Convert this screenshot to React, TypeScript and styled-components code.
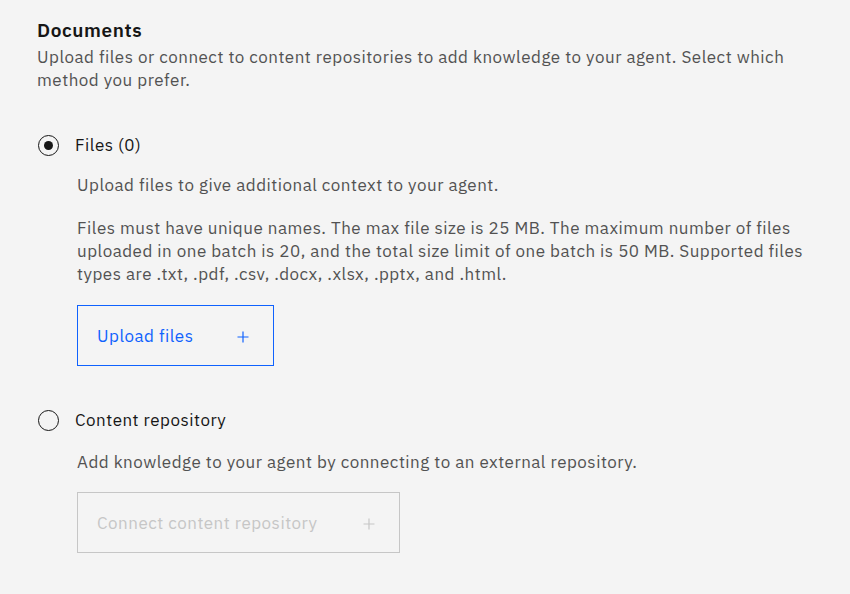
import React from "react";
import styled, { createGlobalStyle } from "styled-components";

const Global = createGlobalStyle`
  html, body { margin: 0; padding: 0; background: #f4f4f4; }
  body { font-family: "IBM Plex Sans", Inter, "Noto Sans", sans-serif; }
`;

const Page = styled.div`
  width: 850px;
  height: 594px;
  box-sizing: border-box;
  padding: 17px 37px 0 37px;
  background: #f4f4f4;
  color: #161616;
`;

const Title = styled.h2`
  margin: 0;
  font-size: 19px;
  line-height: 26px;
  font-weight: 600;
  letter-spacing: 0.6px;
  color: #161616;
`;

const Description = styled.p`
  margin: 3px 0 0 0;
  font-size: 17px;
  line-height: 23px;
  letter-spacing: 0.5px;
  color: #525252;
  white-space: nowrap;
`;

const Options = styled.div`
  display: flex;
  flex-direction: column;
  margin-top: 41px;
`;

const Option = styled.div<{ $gap?: number }>`
  display: flex;
  flex-direction: column;
  margin-bottom: ${(p) => p.$gap ?? 0}px;
`;

const RadioRow = styled.div`
  display: flex;
  align-items: center;
  gap: 16px;
  padding-left: 1px;
  height: 24px;
  font-size: 17px;
  letter-spacing: 0.5px;
  color: #161616;
`;

const Circle = styled.span<{ $checked?: boolean }>`
  width: 21px;
  height: 21px;
  box-sizing: border-box;
  border-radius: 50%;
  border: 1.5px solid #161616;
  display: flex;
  align-items: center;
  justify-content: center;
  &::after {
    content: "";
    width: 9px;
    height: 9px;
    border-radius: 50%;
    background: #161616;
    display: ${(p) => (p.$checked ? "block" : "none")};
  }
`;

const Body = styled.div<{ $top: number }>`
  display: flex;
  flex-direction: column;
  padding-left: 40px;
  margin-top: ${(p) => p.$top}px;
`;

const Text = styled.p<{ $mb?: number }>`
  margin: 0 0 ${(p) => p.$mb ?? 0}px 0;
  font-size: 17px;
  line-height: 23px;
  letter-spacing: 0.5px;
  color: #525252;
  white-space: nowrap;
`;

const Button = styled.div<{ $disabled?: boolean }>`
  display: flex;
  align-items: center;
  box-sizing: border-box;
  height: 61px;
  padding: 0 22px 0 19px;
  background: transparent;
  color: ${(p) => (p.$disabled ? "#c6c6c6" : "#0f62fe")};
  border: 1px solid currentColor;
  font-size: 17px;
  letter-spacing: 0.5px;
  align-self: flex-start;
  cursor: ${(p) => (p.$disabled ? "not-allowed" : "pointer")};
`;

const ButtonLabel = styled.span<{ $w: number }>`
  width: ${(p) => p.$w}px;
  text-align: left;
`;

const IconBox = styled.span`
  display: flex;
  width: 16px;
  height: 16px;
  align-items: center;
  justify-content: center;
  margin-top: 2px;
`;

const Plus = () => (
  <IconBox>
    <svg width="16" height="16" viewBox="0 0 16 16" fill="none">
      <path d="M8 2.5v11M2.5 8h11" stroke="currentColor" strokeWidth="1.2" />
    </svg>
  </IconBox>
);

export default function App() {
  return (
    <Page>
      <Global />
      <Title>Documents</Title>
      <Description>
        Upload files or connect to content repositories to add knowledge to your agent. Select which
        <br />
        method you prefer.
      </Description>
      <Options>
        <Option $gap={42}>
          <RadioRow>
            <Circle $checked />
            Files (0)
          </RadioRow>
          <Body $top={17}>
            <Text $mb={20}>Upload files to give additional context to your agent.</Text>
            <Text $mb={19}>
              Files must have unique names. The max file size is 25 MB. The maximum number of files
              <br />
              uploaded in one batch is 20, and the total size limit of one batch is 50 MB. Supported files
              <br />
              types are .txt, .pdf, .csv, .docx, .xlsx, .pptx, and .html.
            </Text>
            <Button role="button">
              <ButtonLabel $w={138}>Upload files</ButtonLabel>
              <Plus />
            </Button>
          </Body>
        </Option>
        <Option>
          <RadioRow>
            <Circle />
            Content repository
          </RadioRow>
          <Body $top={19}>
            <Text $mb={18}>Add knowledge to your agent by connecting to an external repository.</Text>
            <Button role="button" aria-disabled $disabled>
              <ButtonLabel $w={264}>Connect content repository</ButtonLabel>
              <Plus />
            </Button>
          </Body>
        </Option>
      </Options>
    </Page>
  );
}
